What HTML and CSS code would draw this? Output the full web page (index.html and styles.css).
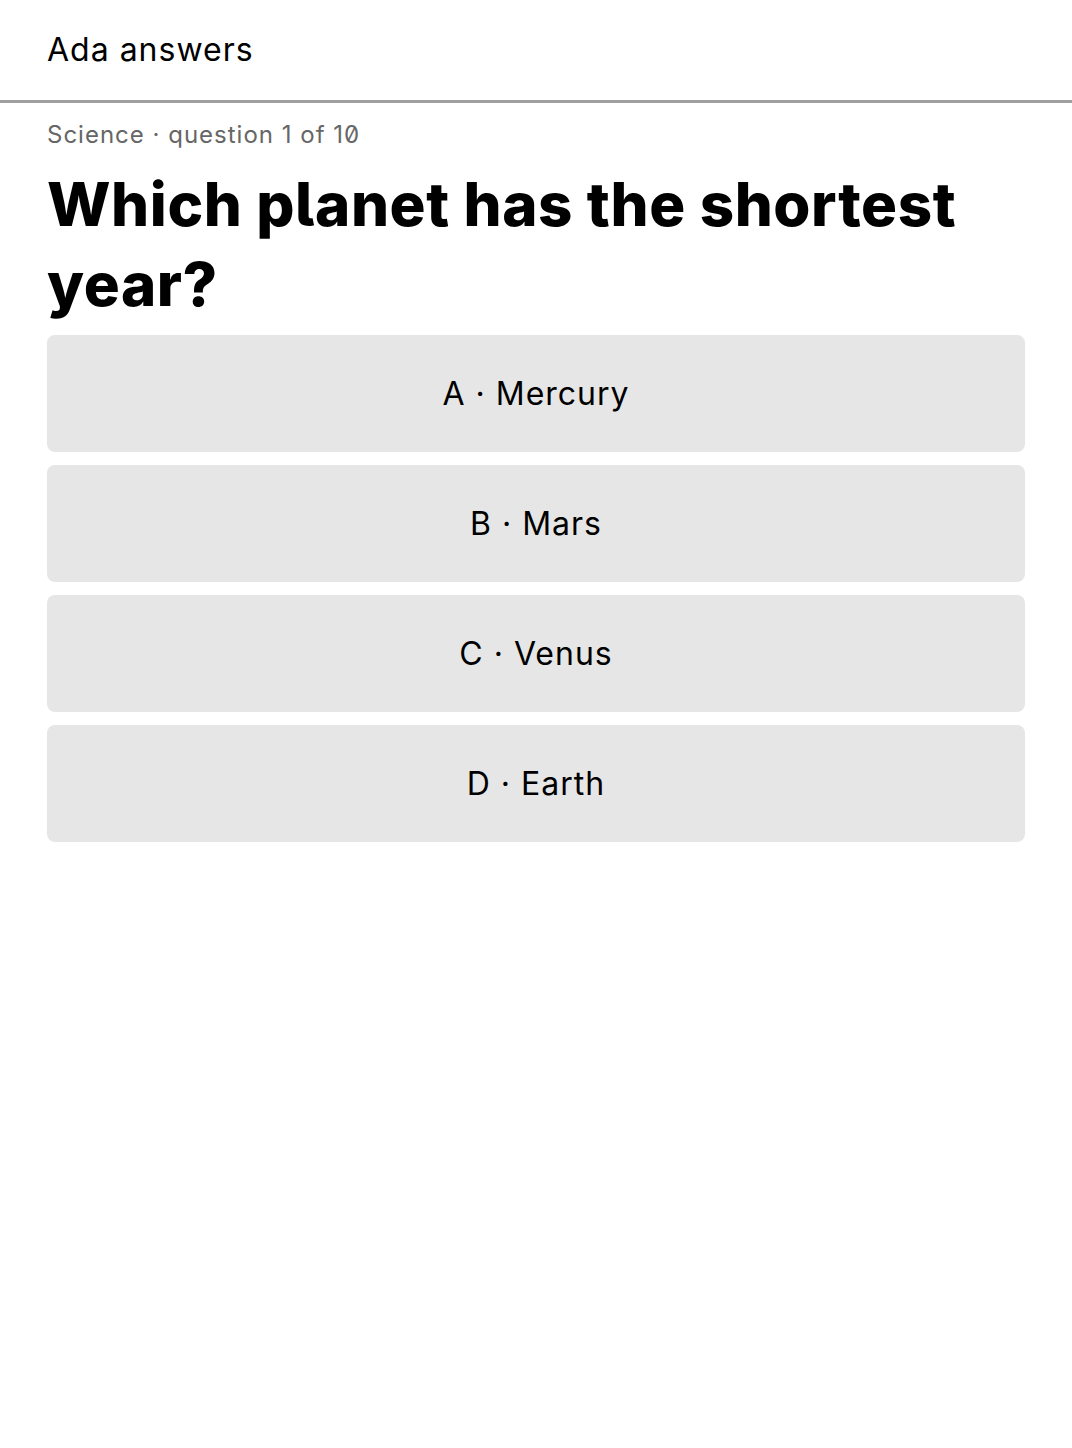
FILE: index.html
```html
<!DOCTYPE html>
<html lang="en">
<head>
  <meta charset="UTF-8">
  <meta name="viewport" content="width=device-width, initial-scale=1.0">
  <title>Ada answers</title>
  <link rel="stylesheet" href="styles.css">
</head>
<body>
  <header class="top-bar">Ada answers</header>
  <main class="quiz">
    <p class="meta">Science · question 1 of 10</p>
    <h1 class="question">Which planet has the shortest year?</h1>
    <div class="answers">
      <button class="answer">A · Mercury</button>
      <button class="answer">B · Mars</button>
      <button class="answer">C · Venus</button>
      <button class="answer">D · Earth</button>
    </div>
  </main>
</body>
</html>
```

FILE: styles.css
```css
body {
  margin: 0;
  font-family: Inter, "Noto Sans", sans-serif;
  font-feature-settings: "ss02";
  letter-spacing: 1px;
  color: #000;
  background: #fff;
}
.top-bar {
  height: 70px;
  padding: 30px 47px 0;
  font-size: 32px;
  border-bottom: 3px solid #a0a0a0;
}
.quiz {
  padding: 0 47px;
}
.meta {
  margin: 17px 0 0;
  font-size: 24px;
  color: #666;
}
.question {
  margin: 15px 0 11px;
  font-size: 60px;
  font-weight: 800;
  letter-spacing: 0.6px;
  line-height: 80px;
}
.answers {
  display: flex;
  flex-direction: column;
  gap: 13px;
}
.answer {
  height: 117px;
  border: none;
  border-radius: 8px;
  background: #e6e6e6;
  font-family: inherit;
  font-feature-settings: inherit;
  letter-spacing: inherit;
  font-size: 32px;
  color: #000;
  cursor: pointer;
}
```
